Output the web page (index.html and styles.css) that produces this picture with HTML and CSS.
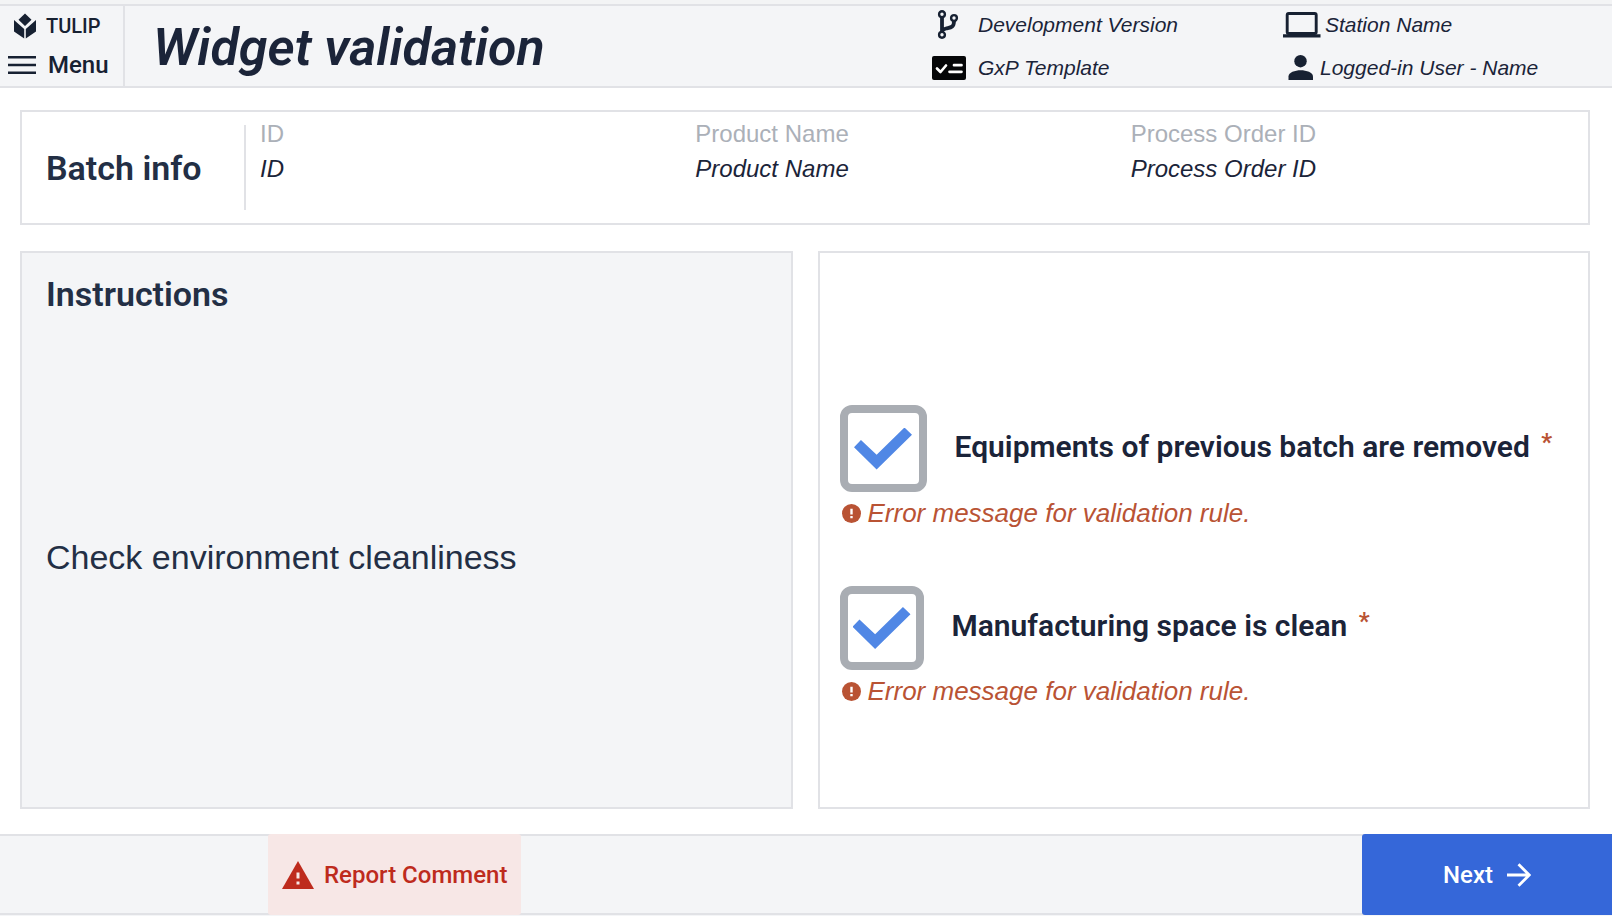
FILE: index.html
```html
<!DOCTYPE html>
<html lang="en">
<head>
<meta charset="utf-8">
<title>Widget validation</title>
<meta name="viewport" content="width=device-width, initial-scale=1">
<link rel="stylesheet" href="styles.css">
</head>
<body>
<header class="topbar">
  <button class="menu" type="button">
    <span class="menu-brand">
      <svg width="22" height="26" viewBox="0 0 22 26" aria-hidden="true"><path fill="#172132" d="M11 0.500l6.500 6.300L11 13 4.500 6.800zM0 7l10.200 9v9.500L0 18.500zM22 7l-10.200 9v9.500L22 18.500z"/></svg>
      <span>TULIP</span>
    </span>
    <span class="menu-row">
      <svg width="28" height="18" viewBox="0 0 28 18" aria-hidden="true"><path fill="#172132" d="M0 0h28v2.500H0zM0 7.800h28v2.500H0zM0 15.500h28V18H0z"/></svg>
      <span>Menu</span>
    </span>
  </button>
  <h1 class="title">Widget validation</h1>
  <ul class="meta">
    <li class="meta-item">
      <svg class="meta-icon-app" width="34" height="30" viewBox="0 0 34 30" aria-hidden="true"><g fill="none" stroke="#172132"><g stroke-width="2.400"><circle cx="10" cy="4.200" r="2.900"/><circle cx="22" cy="8" r="2.900"/><circle cx="10" cy="24.800" r="2.900"/></g><path stroke-width="3.800" d="M10 7v15M22 11c0 7-4 6.500-8 7.500-2 .5-3 1-4 2"/></g></svg>
      <span>Development Version</span>
    </li>
    <li class="meta-item">
      <svg class="meta-icon-app" width="34" height="24" viewBox="0 0 34 24" aria-hidden="true"><rect width="34" height="24" rx="2" fill="#050608"/><path fill="none" stroke="#fff" stroke-width="2.700" stroke-linecap="round" stroke-linejoin="round" d="M5 12.500l3.500 3.500L14 9.500M22 9.200h7.500M17.500 15.800h12"/></svg>
      <span>GxP Template</span>
    </li>
  </ul>
  <ul class="meta">
    <li class="meta-item meta-station">
      <svg width="38" height="26" viewBox="0 0 38 26" aria-hidden="true"><rect x="4.200" y="1.500" width="29" height="20" rx="1.500" fill="none" stroke="#172132" stroke-width="2.900"/><path fill="#172132" d="M0 22.300h37.500V25.500H0z"/></svg>
      <span>Station Name</span>
    </li>
    <li class="meta-item meta-user">
      <svg width="26" height="25" viewBox="0 0 26 25" aria-hidden="true"><circle cx="12.500" cy="6.200" r="6.200" fill="#172132"/><path fill="#172132" d="M.5 25v-3.500C.5 17.300 7 15.200 12.700 15.200S25 17.300 25 21.500V25z"/></svg>
      <span>Logged-in User - Name</span>
    </li>
  </ul>
</header>

<main class="content">
  <section class="card batch">
    <h2 class="heading batch-heading">Batch info</h2>
    <dl class="fields">
      <div><dt>ID</dt><dd>ID</dd></div>
      <div><dt>Product Name</dt><dd>Product Name</dd></div>
      <div><dt>Process Order ID</dt><dd>Process Order ID</dd></div>
    </dl>
  </section>

  <div class="panels">
    <section class="card instructions">
      <h2 class="heading">Instructions</h2>
      <p class="instruction-text">Check environment cleanliness</p>
    </section>
    <section class="card checks">
      <div class="check">
        <div class="check-row">
          <input class="box box-large" type="checkbox" id="equipment" checked required aria-describedby="equipment-error">
          <label for="equipment">Equipments of previous batch are removed <span class="required">*</span></label>
        </div>
        <p class="error" id="equipment-error">
          <svg width="19" height="19" viewBox="0 0 19 19" aria-hidden="true"><circle cx="9.500" cy="9.500" r="9.500" fill="#b95334"/><path fill="#fff" d="M8.300 4.800h2.400v5.700H8.300zM8.300 12h2.400v2.300H8.300z"/></svg>
          <span>Error message for validation rule.</span>
        </p>
      </div>
      <div class="check">
        <div class="check-row">
          <input class="box" type="checkbox" id="space" checked required aria-describedby="space-error">
          <label for="space">Manufacturing space is clean <span class="required">*</span></label>
        </div>
        <p class="error" id="space-error">
          <svg width="19" height="19" viewBox="0 0 19 19" aria-hidden="true"><circle cx="9.500" cy="9.500" r="9.500" fill="#b95334"/><path fill="#fff" d="M8.300 4.800h2.400v5.700H8.300zM8.300 12h2.400v2.300H8.300z"/></svg>
          <span>Error message for validation rule.</span>
        </p>
      </div>
    </section>
  </div>
</main>

<footer class="actions">
  <button class="action report" type="button">
    <svg width="32" height="28" viewBox="0 0 32 28" aria-hidden="true"><path fill="#be2b1d" d="M16 0l16 28H0z"/><path fill="#f7e7e6" d="M14.500 11.500h3v6h-3zM14.500 20.500h3v3h-3z"/></svg>
    <span>Report Comment</span>
  </button>
  <button class="action next" type="button">
    <span>Next</span>
    <svg width="24" height="24" viewBox="0 0 24 24" aria-hidden="true"><path fill="none" stroke="#fff" stroke-width="2.800" d="M0 12h22M11.500 1.200L22.300 12 11.500 22.800"/></svg>
  </button>
</footer>
</body>
</html>
```
FILE: styles.css
```css
* {
  box-sizing: border-box;
}

body {
  --ink: #1b2439;
  --heading: #232f45;
  --line: #e1e2e6;
  --surface: #f4f5f7;
  --helvetica: Helvetica, "Liberation Sans", Arial, sans-serif;
  margin: 0;
  min-height: 100vh;
  display: flex;
  flex-direction: column;
  border-top: 4px solid #f3f4f5;
  background: #fff;
  color: var(--ink);
  font-family: Roboto, sans-serif;
}

h1, h2, p, ul, dl, dd {
  margin: 0;
  padding: 0;
}

svg {
  flex: none;
  display: block;
}

button {
  font-family: inherit;
  border: 0;
  cursor: pointer;
}

/* Top bar */
.topbar {
  display: grid;
  grid-template-columns: 125px 1fr 351px 329px;
  min-height: 84px;
  background: var(--surface);
  border-top: 2px solid var(--line);
  border-bottom: 2px solid var(--line);
}

.menu {
  display: flex;
  flex-direction: column;
  justify-content: space-between;
  padding: 6px 8px 7px;
  background: none;
  border-right: 2px solid var(--line);
  color: #172132;
  font-weight: 500;
}

.menu-brand,
.menu-row {
  display: flex;
  align-items: center;
}

.menu-brand {
  gap: 10px;
  padding-left: 6px;
  font-size: 20px;
  line-height: 28px;
}

.menu-row {
  gap: 12px;
  font-size: 24px;
  line-height: 28px;
}

.title {
  padding: 4px 0 0 28px;
  font-size: 52px;
  line-height: 76px;
  font-weight: 600;
  font-style: italic;
  white-space: nowrap;
}

.meta {
  display: grid;
  grid-template-rows: 1fr 1fr;
  gap: 6px;
  list-style: none;
  font: italic 21px/24px var(--helvetica);
}

.meta-item {
  display: flex;
  align-items: center;
  white-space: nowrap;
}

.meta-icon-app {
  margin-right: 12px;
}

.meta-station {
  gap: 4px;
}

.meta-user {
  gap: 6px;
  padding-left: 5px;
}

/* Content */
.content {
  flex: 1;
  display: flex;
  flex-direction: column;
  gap: 26px;
  padding: 22px 22px 25px 20px;
}

.card {
  border: 2px solid var(--line);
}

.heading {
  color: var(--heading);
  font-size: 34px;
  line-height: 40px;
  font-weight: 600;
}

.batch {
  display: flex;
  min-height: 115px;
  padding: 13px 22px 13px 24px;
}

.batch-heading {
  flex: 0 0 200px;
  padding-top: 23px;
  border-right: 2px solid var(--line);
}

.fields {
  flex: 1;
  display: grid;
  grid-template-columns: repeat(3, 1fr);
  padding-left: 14px;
  font: 24px/35px var(--helvetica);
}

.fields > div {
  margin-top: -9px;
}

.fields dt {
  color: #abb0b8;
}

.fields dd {
  font-style: italic;
}

.panels {
  flex: 1;
  display: grid;
  grid-template-columns: 1fr 1fr;
  gap: 25px;
}

.instructions {
  display: flex;
  flex-direction: column;
  padding: 21px 24px 8px;
  background: var(--surface);
}

.instruction-text {
  margin: auto 0;
  color: var(--heading);
  font: 34px/40px var(--helvetica);
}

.checks {
  display: flex;
  flex-direction: column;
  gap: 57px;
  padding: 152px 20px 60px;
}

.check-row {
  display: flex;
  align-items: center;
  gap: 28px;
  font-size: 30px;
  line-height: 36px;
  font-weight: 600;
}

.check-row label {
  padding-bottom: 4px;
}

.box {
  appearance: none;
  flex: none;
  display: grid;
  place-items: center;
  width: 84px;
  height: 84px;
  margin: 0;
  border: 8px solid #a9adb3;
  border-radius: 12px;
  background: #fff;
}

.box-large {
  width: 87px;
  height: 87px;
}

.box:checked::before {
  content: "";
  width: 58px;
  height: 42px;
  background: #5087e5;
  clip-path: polygon(0 47%, 12% 30%, 39% 65%, 87% 0, 100% 17%, 39% 100%);
}

.required {
  margin-left: 4px;
  color: #b95334;
  font-size: 24px;
  line-height: 24px;
  font-weight: 700;
  vertical-align: 7px;
}

.error {
  display: flex;
  align-items: center;
  gap: 7px;
  padding: 5px 0 0 2px;
  color: #b95334;
  font: italic 26px/32px var(--helvetica);
}

/* Footer */
.actions {
  display: flex;
  justify-content: space-between;
  height: 82px;
  border-bottom: 1px solid #f4f5f7;
  background: var(--surface);
  box-shadow: inset 0 2px var(--line), inset 0 -2px var(--line);
}

.action {
  display: flex;
  align-items: center;
  justify-content: center;
  padding: 1px 14px 0;
  font-size: 24px;
  line-height: 28px;
  font-weight: 500;
  border-radius: 3px;
}

.report {
  gap: 10px;
  margin-left: 268px;
  background: #f7e7e6;
  color: #be2b1d;
}

.next {
  gap: 14px;
  width: 250px;
  background: #3567d9;
  color: #fff;
  border-radius: 3px 0 0 3px;
}
```
